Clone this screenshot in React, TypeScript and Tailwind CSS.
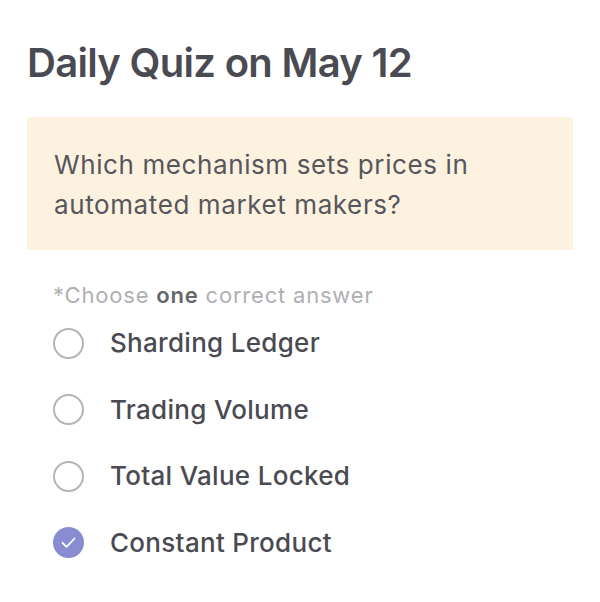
import React from "react";

const options = [
  { label: "Sharding Ledger", checked: false },
  { label: "Trading Volume", checked: false },
  { label: "Total Value Locked", checked: false },
  { label: "Constant Product", checked: true },
];

export default function App() {
  return (
    <div
      className="w-[600px] h-[602px] bg-white px-[27px] pt-[37px]"
      style={{ fontFamily: "Inter, 'Noto Sans', sans-serif" }}
    >
      <h1 className="text-[40px] leading-[52px] font-semibold text-[#4a4b52] tracking-[-0.7px]">
        Daily Quiz on May 12
      </h1>
      <div className="mt-[28px] bg-[#fdf1e0] rounded-[2px] px-[27px] pt-[28px] pb-[25px]">
        <p className="text-[26px] leading-[40px] text-[#56575c] tracking-[0.6px]">
          Which mechanism sets prices in automated market makers?
        </p>
      </div>
      <div className="mt-[30px] px-[26px]">
        <p className="text-[22px] leading-[30px] text-[#b0b0b4] tracking-[0.8px]">
          *Choose <span className="font-semibold text-[#66676c]">one</span> correct answer
        </p>
        <div className="mt-[13px] flex flex-col gap-[26.5px]">
          {options.map((o) => (
            <div key={o.label} className="flex items-center gap-[26px] h-[40px]">
              {o.checked ? (
                <div className="w-[31px] h-[31px] rounded-full bg-[#8a8cd1] flex items-center justify-center">
                  <svg width="31" height="31" viewBox="0 0 31 31" fill="none">
                    <path d="M9.5 15.8l4 4 8-8.3" stroke="white" strokeWidth="1.8" strokeLinecap="round" strokeLinejoin="round" />
                  </svg>
                </div>
              ) : (
                <div className="w-[31px] h-[31px] rounded-full border-2 border-[#b5b5b8] bg-white" />
              )}
              <span className="text-[26px] leading-[40px] font-medium text-[#4a4b52] tracking-[0.3px]">{o.label}</span>
            </div>
          ))}
        </div>
      </div>
    </div>
  );
}
